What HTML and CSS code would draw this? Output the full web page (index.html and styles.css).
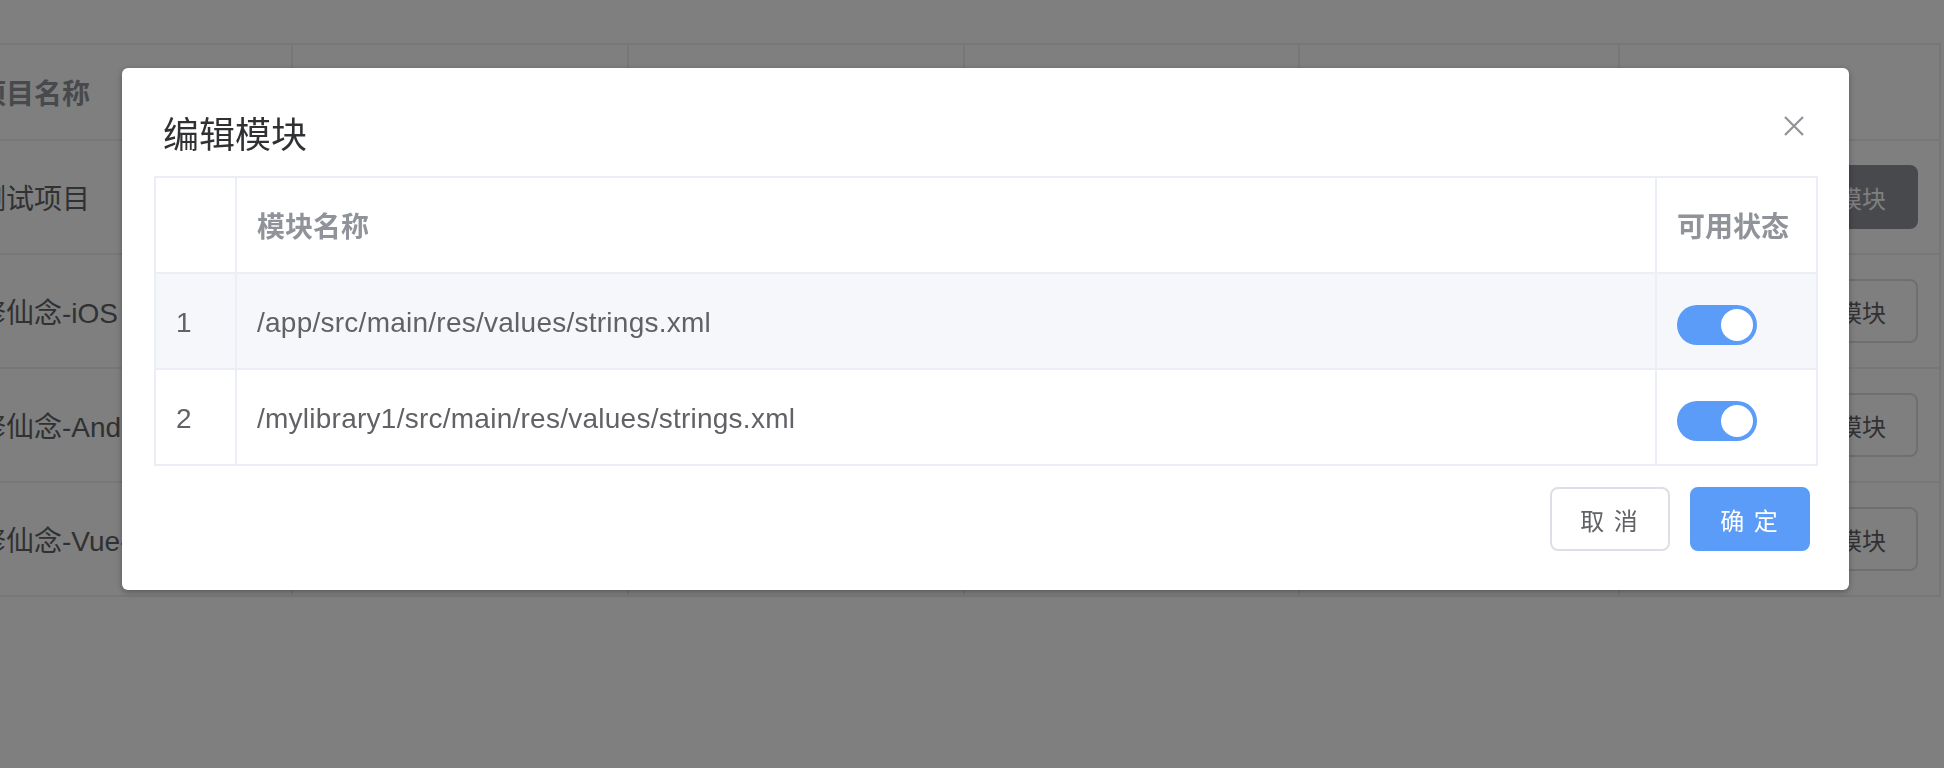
FILE: index.html
```html
<!DOCTYPE html>
<html lang="zh-CN">
<head>
<meta charset="utf-8">
<title>编辑模块</title>
<link rel="stylesheet" href="styles.css">
</head>
<body>
<div class="page">
  <div class="bg-table">
    <div class="bg-row bg-head">
      <div class="bg-cell">项目名称</div>
      <div class="bg-cell">项目标识</div>
      <div class="bg-cell">项目类型</div>
      <div class="bg-cell">创建时间</div>
      <div class="bg-cell">备注</div>
      <div class="bg-cell">操作</div>
    </div>
    <div class="bg-row">
      <div class="bg-cell">测试项目</div>
      <div class="bg-cell">test</div>
      <div class="bg-cell">Android</div>
      <div class="bg-cell">2019-01-01</div>
      <div class="bg-cell"></div>
      <div class="bg-cell bg-ops"><span class="bg-btn dark">编辑模块</span></div>
    </div>
    <div class="bg-row">
      <div class="bg-cell">修仙念-iOS</div>
      <div class="bg-cell">xxn-ios</div>
      <div class="bg-cell">iOS</div>
      <div class="bg-cell">2019-01-01</div>
      <div class="bg-cell"></div>
      <div class="bg-cell bg-ops"><span class="bg-btn">编辑模块</span></div>
    </div>
    <div class="bg-row">
      <div class="bg-cell">修仙念-Android</div>
      <div class="bg-cell">xxn-android</div>
      <div class="bg-cell">Android</div>
      <div class="bg-cell">2019-01-01</div>
      <div class="bg-cell"></div>
      <div class="bg-cell bg-ops"><span class="bg-btn">编辑模块</span></div>
    </div>
    <div class="bg-row">
      <div class="bg-cell">修仙念-Vue-Web</div>
      <div class="bg-cell">xxn-vue</div>
      <div class="bg-cell">Web</div>
      <div class="bg-cell">2019-01-01</div>
      <div class="bg-cell"></div>
      <div class="bg-cell bg-ops"><span class="bg-btn">编辑模块</span></div>
    </div>
  </div>
</div>

<div class="overlay"></div>

<div class="dialog">
  <div class="dialog-header">
    <span class="dialog-title">编辑模块</span>
    <svg class="close" width="20" height="20" viewBox="0 0 20 20" aria-label="关闭">
      <path d="M1 1 L19 19 M19 1 L1 19" stroke="#909399" stroke-width="2.2" fill="none"/>
    </svg>
  </div>
  <div class="dialog-body">
    <table class="mod-table">
      <colgroup>
        <col class="c-idx">
        <col class="c-name">
        <col class="c-state">
      </colgroup>
      <thead>
        <tr>
          <th></th>
          <th>模块名称</th>
          <th>可用状态</th>
        </tr>
      </thead>
      <tbody>
        <tr class="hl">
          <td>1</td>
          <td>/app/src/main/res/values/strings.xml</td>
          <td><span class="switch"><span class="knob"></span></span></td>
        </tr>
        <tr>
          <td>2</td>
          <td>/mylibrary1/src/main/res/values/strings.xml</td>
          <td><span class="switch"><span class="knob"></span></span></td>
        </tr>
      </tbody>
    </table>
  </div>
  <div class="dialog-footer">
    <span class="btn">取 消</span>
    <span class="btn primary">确 定</span>
  </div>
</div>
</body>
</html>
```

FILE: styles.css
```css
html, body {
  margin: 0;
  padding: 0;
  width: 1944px;
  height: 768px;
  overflow: hidden;
  background: #ffffff;
  font-family: "Liberation Sans", "Noto Sans CJK SC", sans-serif;
}

.page {
  padding-top: 43px;
}

/* background table */
.bg-table {
  margin-left: -44px;
  width: 1985px;
  border-top: 2px solid #ebeef5;
  border-left: 2px solid #ebeef5;
  box-sizing: border-box;
}

.bg-row {
  display: grid;
  grid-template-columns: 335px 336px 336px 335px 320px 321px;
  height: 114px;
}

.bg-row.bg-head {
  height: 96px;
}

.bg-cell {
  box-sizing: border-box;
  border-right: 2px solid #ebeef5;
  border-bottom: 2px solid #ebeef5;
  padding: 0 20px;
  display: flex;
  align-items: center;
  font-size: 28px;
  color: #606266;
  white-space: nowrap;
  overflow: hidden;
}

.bg-head .bg-cell {
  color: #909399;
  font-weight: bold;
}

.bg-ops {
  justify-content: flex-end;
  padding-right: 21px;
}

.bg-btn {
  box-sizing: border-box;
  height: 64px;
  padding: 0 30px;
  display: inline-flex;
  align-items: center;
  border: 2px solid #dcdfe6;
  border-radius: 8px;
  font-family: "Noto Sans CJK SC", sans-serif;
  font-size: 24px;
  color: #606266;
  background: #ffffff;
}

.bg-btn.dark {
  background: #909399;
  border-color: #909399;
  color: #ffffff;
}

.overlay {
  position: fixed;
  inset: 0;
  background: rgba(0, 0, 0, 0.5);
}

/* dialog */
.dialog {
  position: absolute;
  left: 122px;
  top: 68px;
  width: 1727px;
  background: #ffffff;
  border-radius: 6px;
  box-shadow: 0 2px 6px rgba(0, 0, 0, 0.3);
}

.dialog-header {
  display: flex;
  justify-content: space-between;
  align-items: flex-start;
  padding: 40px 40px 20px 41px;
}

.dialog-title {
  font-family: "Noto Sans CJK SC", sans-serif;
  font-size: 36px;
  line-height: 48px;
  color: #303133;
}

.close {
  display: block;
  margin-top: 8px;
  margin-right: 5px;
}

.dialog-body {
  padding: 0 31px 0 32px;
}

.mod-table {
  width: 100%;
  border-collapse: collapse;
  table-layout: fixed;
  font-size: 28px;
  color: #606266;
}

.c-idx { width: 81px; }
.c-state { width: 161px; }

.mod-table th,
.mod-table td {
  border: 2px solid #ebeef5;
  text-align: left;
  line-height: 46px;
  padding: 26px 20px 22px;
  white-space: nowrap;
}

.mod-table th {
  font-family: "Noto Sans CJK SC", sans-serif;
  font-weight: bold;
  color: #909399;
  padding: 24px 20px;
}

.mod-table td {
  letter-spacing: 0.25px;
}

.mod-table tr.hl td {
  background: #f5f7fa;
}

.switch {
  box-sizing: border-box;
  display: inline-flex;
  justify-content: flex-end;
  align-items: center;
  vertical-align: middle;
  width: 80px;
  height: 40px;
  padding: 0 4px;
  border-radius: 20px;
  background: #5b9cf8;
}

.knob {
  width: 32px;
  height: 32px;
  border-radius: 50%;
  background: #ffffff;
}

.dialog-footer {
  display: flex;
  justify-content: flex-end;
  gap: 20px;
  padding: 21px 39px 39px;
}

.btn {
  box-sizing: border-box;
  width: 120px;
  height: 64px;
  display: inline-flex;
  align-items: center;
  justify-content: center;
  border: 2px solid #dcdfe6;
  border-radius: 8px;
  font-family: "Noto Sans CJK SC", sans-serif;
  font-size: 24px;
  letter-spacing: 2px;
  color: #606266;
  background: #ffffff;
}

.btn.primary {
  background: #5b9cf8;
  border-color: #5b9cf8;
  color: #ffffff;
}
```
